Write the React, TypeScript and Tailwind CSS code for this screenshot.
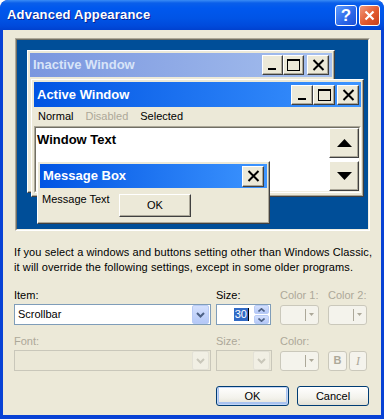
import React from 'react';

const raised =
  'bg-[#ECE9D8] border border-t-white border-l-white border-r-[#404040] border-b-[#404040] shadow-[inset_-1px_-1px_0_#ACA899]';

function CapBtn({ kind, w = 21, h = 20 }: { kind: 'min' | 'max' | 'close'; w?: number; h?: number }) {
  return (
    <div className={`${raised} flex items-center justify-center shrink-0`} style={{ width: w, height: h }}>
      <svg width="13" height="12" viewBox="0 0 13 12" shapeRendering="crispEdges">
        {kind === 'min' && <rect x="2" y="9" width="8" height="2" fill="#000" />}
        {kind === 'max' && (
          <>
            <rect x="0" y="0" width="13" height="2" fill="#000" />
            <rect x="0" y="0" width="1" height="12" fill="#000" />
            <rect x="12" y="0" width="1" height="12" fill="#000" />
            <rect x="0" y="11" width="13" height="1" fill="#000" />
          </>
        )}
        {kind === 'close' && (
          <path d="M1.5 1 L11.5 11 M11.5 1 L1.5 11" stroke="#000" strokeWidth="2" fill="none" shapeRendering="auto" />
        )}
      </svg>
    </div>
  );
}

function ScrollBtn({ up }: { up?: boolean }) {
  return (
    <div className={`${raised} w-[30px] h-[30px] flex items-center justify-center`}>
      <svg width="15" height="8" viewBox="0 0 15 8">
        {up ? <path d="M7.5 0 L15 8 L0 8 Z" fill="#000" /> : <path d="M0 0 L15 0 L7.5 8 Z" fill="#000" />}
      </svg>
    </div>
  );
}

function Chevron({ color }: { color: string }) {
  return (
    <svg width="9" height="6" viewBox="0 0 9 6">
      <path d="M1 1 L4.5 4.5 L8 1" stroke={color} strokeWidth="2" fill="none" />
    </svg>
  );
}

function DropBtn({ disabled }: { disabled?: boolean }) {
  return (
    <div
      className={
        disabled
          ? 'w-[17px] h-[19px] rounded-[2px] border border-[#E3E1D6] bg-[#F1EFE4] flex items-center justify-center'
          : 'w-[17px] h-[19px] rounded-[2px] border border-[#B9CBF5] bg-[linear-gradient(180deg,#D4E0FD,#B4C8F7)] flex items-center justify-center'
      }
    >
      <Chevron color={disabled ? '#C9C7BA' : '#4D6185'} />
    </div>
  );
}

function ColorBtn() {
  return (
    <div className="w-[39px] h-[20px] rounded-[3px] border border-[#CAC8BB] bg-[#F4F3EC] flex items-center justify-end pr-[4px] gap-[3px]">
      <div className="w-px h-[12px] bg-[#ACA899]" />
      <svg width="5" height="3" viewBox="0 0 5 3">
        <path d="M0 0 L5 0 L2.5 3 Z" fill="#ACA899" />
      </svg>
    </div>
  );
}

export default function App() {
  return (
    <div className="w-[384px] h-[419px] bg-[#0842D5] rounded-t-[8px] flex flex-col font-['Liberation_Sans',Arial,sans-serif] text-[11px] text-black overflow-hidden">
      {/* title bar */}
      <div className="h-[30px] shrink-0 rounded-t-[8px] bg-[linear-gradient(180deg,#3A8CF5_0px,#0A5FEA_3px,#0058EE_8px,#0054E6_18px,#004ADB_26px,#0041CF_30px)] flex items-center pl-[7px] pr-[4px]">
        <span className="flex-1 text-white font-bold text-[13px] [text-shadow:1px_1px_0_#0A1F8F] tracking-[0.2px]">
          Advanced Appearance
        </span>
        <div className="w-[22px] h-[21px] rounded-[3px] border border-white bg-[linear-gradient(135deg,#5C9BFF,#2A66E8_60%,#1C50D6)] flex items-center justify-center text-white font-bold text-[17px] leading-none mr-[2px]">
          ?
        </div>
        <div className="w-[21px] h-[21px] rounded-[3px] border border-white bg-[linear-gradient(135deg,#F09A7E,#E2592E_55%,#C8411C)] flex items-center justify-center">
          <svg width="11" height="11" viewBox="0 0 11 11">
            <path d="M1.5 1.5 L9.5 9.5 M9.5 1.5 L1.5 9.5" stroke="#fff" strokeWidth="2.2" />
          </svg>
        </div>
      </div>

      {/* body */}
      <div className="flex-1 mx-[3px] mb-[4px] bg-[#ECE9D8] pl-[11px] flex flex-col">
        {/* preview */}
        <div className="mt-[8px] ml-[1px] w-[355px] h-[193px] border border-t-[#ACA899] border-l-[#ACA899] border-r-white border-b-white">
          <div className="w-full h-full border border-t-[#716F64] border-l-[#716F64] border-r-[#F1EFE2] border-b-[#F1EFE2] bg-[#004E98] relative">
            {/* inactive window */}
            <div className={`${raised} absolute left-[10px] top-[10px] w-[308px] h-[143px] p-[1px]`}>
              <div className="h-[24px] mx-[1px] mt-[1px] bg-[linear-gradient(90deg,#7A96DF,#A6C0EE)] flex items-center pl-[3px] pr-[3px]">
                <span className="flex-1 font-bold text-[13px] text-[#D8E4F8]">Inactive Window</span>
                <CapBtn kind="min" />
                <CapBtn kind="max" />
                <div className="w-[3px]" />
                <CapBtn kind="close" w={22} />
              </div>
            </div>

            {/* active window */}
            <div className={`${raised} absolute left-[14px] top-[39px] w-[333px] h-[118px] p-[1px] flex flex-col`}>
              <div className="h-[25px] mx-[1px] mt-[1px] shrink-0 bg-[linear-gradient(90deg,#0054E3,#3D95FF)] flex items-center pl-[3px] pr-[2px]">
                <span className="flex-1 font-bold text-[13px] text-white">Active Window</span>
                <CapBtn kind="min" w={22} />
                <CapBtn kind="max" w={22} />
                <div className="w-[2px]" />
                <CapBtn kind="close" w={22} />
              </div>
              <div className="h-[19px] shrink-0 flex items-center pl-[5px] gap-[12px]">
                <span>Normal</span>
                <span className="text-[#ACA899]">Disabled</span>
                <span>Selected</span>
              </div>
              <div className="flex-1 mx-[1px] mb-[2px] border border-t-[#ACA899] border-l-[#ACA899] border-r-white border-b-white">
                <div className="h-full bg-white border border-t-[#716F64] border-l-[#716F64] border-r-[#F1EFE2] border-b-[#F1EFE2] flex">
                  <div className="flex-1 font-bold text-[13px] pl-[1px] pt-[2px]">Window Text</div>
                  <div className="flex flex-col justify-between">
                    <ScrollBtn up />
                    <ScrollBtn />
                  </div>
                </div>
              </div>
            </div>

            {/* message box */}
            <div className={`${raised} absolute left-[20px] top-[121px] w-[233px] h-[63px] p-[1px] flex flex-col`}>
              <div className="h-[24px] mx-[1px] mt-[1px] shrink-0 bg-[linear-gradient(90deg,#0054E3,#3D95FF)] flex items-center pl-[3px] pr-[3px]">
                <span className="flex-1 font-bold text-[13px] text-white">Message Box</span>
                <CapBtn kind="close" w={22} h={21} />
              </div>
              <div className="flex pl-[3px] pt-[3px]">
                <span className="w-[77px]">Message Text</span>
                <div className={`${raised} w-[72px] h-[23px] mt-[3px] flex items-center justify-center`}>OK</div>
              </div>
            </div>
          </div>
        </div>

        {/* description */}
        <div className="mt-[14px] leading-[15px] whitespace-nowrap tracking-[0.1px]">
          <div>If you select a windows and buttons setting other than Windows Classic,</div>
          <div>it will override the following settings, except in some older programs.</div>
        </div>

        {/* item row */}
        <div className="mt-[13px] grid grid-cols-[202px_64px_48px_39px] leading-[15px]">
          <span>Item:</span>
          <span>Size:</span>
          <span className="text-[#ACA899]">Color 1:</span>
          <span className="text-[#ACA899]">Color 2:</span>
        </div>
        <div className="mt-[1px] grid grid-cols-[202px_64px_48px_39px] items-center">
          <div className="w-[197px] h-[21px] border border-[#7F9DB9] bg-white flex items-center pr-[1px]">
            <span className="flex-1 pl-[3px]">Scrollbar</span>
            <DropBtn />
          </div>
          <div className="w-[55px] h-[21px] border border-[#7F9DB9] bg-white flex items-center pr-[1px]">
            <div className="flex-1 flex justify-end items-center pr-[5px]">
              <span className="bg-[#316AC5] text-white px-[1px] leading-[13px]">30</span>
              <span className="w-px h-[13px] bg-black" />
            </div>
            <div className="w-[15px] h-[19px] flex flex-col gap-px">
              <div className="flex-1 rounded-[2px] border border-[#B9CBF5] bg-[linear-gradient(180deg,#D4E0FD,#B4C8F7)] flex items-center justify-center">
                <svg width="7" height="4" viewBox="0 0 7 4">
                  <path d="M0.5 3.5 L3.5 0.8 L6.5 3.5" stroke="#4D6185" strokeWidth="1.6" fill="none" />
                </svg>
              </div>
              <div className="flex-1 rounded-[2px] border border-[#B9CBF5] bg-[linear-gradient(180deg,#D4E0FD,#B4C8F7)] flex items-center justify-center">
                <svg width="7" height="4" viewBox="0 0 7 4">
                  <path d="M0.5 0.5 L3.5 3.2 L6.5 0.5" stroke="#4D6185" strokeWidth="1.6" fill="none" />
                </svg>
              </div>
            </div>
          </div>
          <ColorBtn />
          <ColorBtn />
        </div>

        {/* font row */}
        <div className="mt-[9px] grid grid-cols-[202px_64px_48px_39px] leading-[15px] text-[#ACA899]">
          <span>Font:</span>
          <span>Size:</span>
          <span>Color:</span>
          <span />
        </div>
        <div className="mt-[1px] grid grid-cols-[202px_64px_48px_39px] items-center">
          <div className="w-[197px] h-[21px] border border-[#C9C7BA] bg-[#EBE8D7] flex items-center justify-end pr-[1px]">
            <DropBtn disabled />
          </div>
          <div className="w-[56px] h-[21px] border border-[#C9C7BA] bg-[#EBE8D7] flex items-center justify-end pr-[1px]">
            <DropBtn disabled />
          </div>
          <ColorBtn />
          <div className="flex gap-[2px]">
            <div className="w-[19px] h-[20px] rounded-[3px] border border-[#CAC8BB] bg-[#F4F3EC] flex items-center justify-center font-bold text-[#ACA899]">
              B
            </div>
            <div className="w-[18px] h-[20px] rounded-[3px] border border-[#CAC8BB] bg-[#F4F3EC] flex items-center justify-center italic font-['Liberation_Serif',serif] text-[12px] text-[#ACA899]">
              I
            </div>
          </div>
        </div>

        {/* buttons */}
        <div className="mt-[15px] flex pl-[202px] gap-[8px]">
          <div className="w-[73px] h-[20px] rounded-[3px] border border-[#003C74] bg-[linear-gradient(180deg,#FFFFFF,#F3F2EC_60%,#E3E0D5)] shadow-[inset_0_0_0_1px_#C4D6F6,inset_0_-1px_0_2px_#A9C3F0] flex items-center justify-center">
            OK
          </div>
          <div className="w-[72px] h-[20px] rounded-[3px] border border-[#003C74] bg-[linear-gradient(180deg,#FFFFFF,#F3F2EC_60%,#E3E0D5)] flex items-center justify-center">
            Cancel
          </div>
        </div>
      </div>
    </div>
  );
}
